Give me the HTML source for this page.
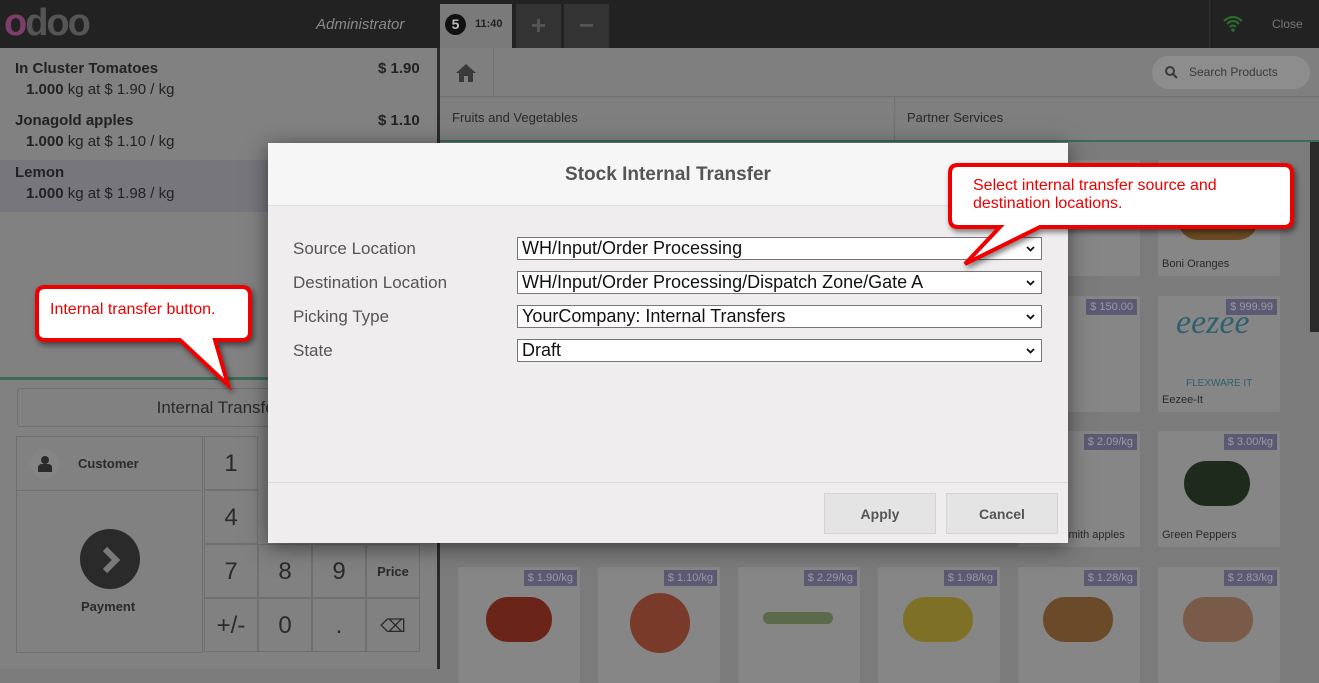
<!DOCTYPE html>
<html><head><style>
*{box-sizing:border-box;margin:0;padding:0}
body{width:1319px;height:669px;overflow:hidden;position:relative;background:#7b7b7b;font-family:"Liberation Sans",sans-serif;color:#333}
.abs{position:absolute}
.top{left:0;top:0;width:1319px;height:48px;background:#222}
.left{left:0;top:48px;width:437px;height:621px;background:#818181}
.sep{left:437px;top:48px;width:3px;height:621px;background:#2a2a2a}
.ol{font-size:15px;color:#222}
.card{position:absolute;width:122px;height:116px;background:#868686;border-radius:2px}
.card .p{position:absolute;right:3px;top:3px;background:#5b5a72;color:#9a9aa5;font-size:11px;padding:2px 4px}
.card .n{position:absolute;left:4px;bottom:6px;font-size:11px;color:#2a2a2a}
.key{position:absolute;width:54px;height:54px;border:1px solid #707070;font-size:24px;color:#2a2a2a;text-align:center;line-height:54px}
.modal{left:268px;top:143px;width:800px;height:400px;background:#efeded;box-shadow:0 4px 20px rgba(0,0,0,.5)}
.lbl{position:absolute;left:25px;font-size:17px;color:#555}
.sel{position:absolute;left:249px;width:525px;height:23px;background:#fff;border:1px solid #777;font-size:18px;color:#111;padding-left:4px;line-height:21px}
.sel svg{position:absolute;right:6px;top:8px}
.btn{position:absolute;top:350px;width:112px;height:41px;background:#e4e4e4;border:1px solid #d3d3d3;font-size:14px;color:#555;text-align:center;line-height:41px;font-weight:bold}
.blob{position:absolute;border-radius:22px}
</style></head><body>
<div class="abs top"></div>
<div class="abs" style="left:4px;top:2px;font-size:38px;color:#555;letter-spacing:-2px;font-weight:bold"><span style="color:#7b3d6a">o</span>doo</div>
<div class="abs" style="left:316px;top:16px;font-size:15px;color:#8a8a8a;font-style:italic">Administrator</div>
<div class="abs" style="left:440px;top:4px;width:72px;height:44px;background:#7a7a7a"></div>
<div class="abs" style="left:445px;top:14px;width:21px;height:21px;border-radius:50%;background:#111;color:#bbb;font-size:14px;text-align:center;line-height:21px;font-weight:bold">5</div>
<div class="abs" style="left:475px;top:18px;font-size:11px;color:#222;font-weight:bold">11:40</div>
<div class="abs" style="left:516px;top:4px;width:45px;height:44px;background:#333;color:#555;font-size:26px;text-align:center;line-height:42px;font-weight:bold">+</div>
<div class="abs" style="left:564px;top:4px;width:45px;height:44px;background:#333;color:#555;font-size:26px;text-align:center;line-height:42px;font-weight:bold">−</div>
<div class="abs" style="left:1209px;top:0;width:1px;height:48px;background:#333"></div>
<svg class="abs" style="left:1222px;top:14px" width="22" height="18"><path d="M2 7 Q11 -1 20 7 M5 10 Q11 4 17 10 M8 13 Q11 10 14 13" stroke="#2d6a2d" stroke-width="2.2" fill="none"/><circle cx="11" cy="16" r="1.8" fill="#2d6a2d"/></svg>
<div class="abs" style="left:1272px;top:17px;font-size:12px;color:#777">Close</div>

<div class="abs left"></div>
<div class="abs" style="left:0;top:160px;width:437px;height:52px;background:#77767d"></div>
<div class="abs ol" style="left:15px;top:60px;font-weight:bold">In Cluster Tomatoes</div><div class="abs ol" style="left:378px;top:60px;font-weight:bold">$ 1.90</div>
<div class="abs ol" style="left:26px;top:81px"><b>1.000</b> kg at $ 1.90 / kg</div>
<div class="abs ol" style="left:15px;top:112px;font-weight:bold">Jonagold apples</div><div class="abs ol" style="left:378px;top:112px;font-weight:bold">$ 1.10</div>
<div class="abs ol" style="left:26px;top:133px"><b>1.000</b> kg at $ 1.10 / kg</div>
<div class="abs ol" style="left:15px;top:164px;font-weight:bold">Lemon</div>
<div class="abs ol" style="left:26px;top:185px"><b>1.000</b> kg at $ 1.98 / kg</div>
<div class="abs" style="left:0;top:377px;width:437px;height:3px;background:#3d6b55"></div>
<div class="abs" style="left:17px;top:388px;width:403px;height:39px;border:1px solid #6f6f6f;border-radius:3px;font-size:17px;color:#2a2a2a;text-align:center;line-height:38px">Internal Transfer</div>
<div class="abs" style="left:16px;top:436px;width:187px;height:217px;border:1px solid #6f6f6f"></div>
<div class="abs" style="left:16px;top:490px;width:187px;height:1px;background:#6f6f6f"></div>
<div class="abs" style="left:30px;top:449px;width:30px;height:30px;border-radius:50%;background:#858585"></div>
<svg class="abs" style="left:37px;top:455px" width="16" height="17"><circle cx="8" cy="5" r="4" fill="#2a2a2a"/><path d="M1 17 V13 Q1 9 5 9 H11 Q15 9 15 13 V17 Z" fill="#2a2a2a"/></svg>
<div class="abs" style="left:78px;top:456px;font-size:13px;font-weight:bold;color:#2a2a2a">Customer</div>
<div class="abs" style="left:80px;top:529px;width:60px;height:60px;border-radius:50%;background:#2a2a2a"></div>
<svg class="abs" style="left:100px;top:546px" width="22" height="28"><path d="M5 3 L16 14 L5 25" stroke="#7a7a7a" stroke-width="6" fill="none"/></svg>
<div class="abs" style="left:81px;top:599px;font-size:13px;font-weight:bold;color:#2a2a2a">Payment</div>
<div class="key" style="left:204px;top:436px">1</div>
<div class="key" style="left:204px;top:490px">4</div>
<div class="key" style="left:204px;top:544px">7</div><div class="key" style="left:258px;top:544px">8</div><div class="key" style="left:312px;top:544px">9</div><div class="key" style="left:366px;top:544px;font-size:13px;font-weight:bold">Price</div>
<div class="key" style="left:204px;top:598px">+/-</div><div class="key" style="left:258px;top:598px">0</div><div class="key" style="left:312px;top:598px">.</div><div class="key" style="left:366px;top:598px;font-size:18px">⌫</div>
<div class="abs sep"></div>

<div class="abs" style="left:440px;top:48px;width:879px;height:49px;background:#7f7f7f;border-bottom:1px solid #707070"></div>
<div class="abs" style="left:440px;top:48px;width:54px;height:49px;border-right:1px solid #707070"></div>
<svg class="abs" style="left:455px;top:63px" width="22" height="20"><path d="M11 1 L1 10 H4 V19 H9 V13 H13 V19 H18 V10 H21 Z" fill="#3a3a3a"/></svg>
<div class="abs" style="left:1152px;top:56px;width:158px;height:33px;border-radius:17px;background:#8d8d8d;font-size:12px;color:#3a3a3a;line-height:33px;padding-left:37px">Search Products</div>
<svg class="abs" style="left:1165px;top:66px" width="13" height="13"><circle cx="5" cy="5" r="4" stroke="#3a3a3a" stroke-width="2" fill="none"/><path d="M8 8 L12 12" stroke="#3a3a3a" stroke-width="2"/></svg>
<div class="abs" style="left:440px;top:98px;width:879px;height:42px;background:#7f7f7f"></div>
<div class="abs" style="left:894px;top:98px;width:1px;height:42px;background:#707070"></div>
<div class="abs" style="left:452px;top:110px;font-size:13px;color:#2a2a2a">Fruits and Vegetables</div>
<div class="abs" style="left:907px;top:110px;font-size:13px;color:#2a2a2a">Partner Services</div>
<div class="abs" style="left:440px;top:140px;width:879px;height:2px;background:#3d6b55"></div>

<div class="card" style="left:1018px;top:160px"><div class="n">Grapes</div></div>
<div class="card" style="left:1158px;top:160px"><div class="blob" style="left:20px;top:40px;width:80px;height:40px;background:#6a4a22"></div><div class="n">Boni Oranges</div></div>
<div class="card" style="left:1018px;top:296px"><div class="p">$ 150.00</div></div>
<div class="card" style="left:1158px;top:296px"><div class="p">$ 999.99</div><div class="abs" style="left:18px;top:8px;font-size:34px;color:#2f6070;font-style:italic;font-family:'Liberation Serif',serif">eezee</div><div class="abs" style="left:28px;top:82px;font-size:10px;color:#2f6070">FLEXWARE IT</div><div class="n">Eezee-It</div></div>
<div class="card" style="left:1018px;top:431px"><div class="p">$ 2.09/kg</div><div class="n">Granny Smith apples</div></div>
<div class="card" style="left:1158px;top:431px"><div class="p">$ 3.00/kg</div><div class="blob" style="left:26px;top:30px;width:66px;height:45px;background:#1e2a1b"></div><div class="n">Green Peppers</div></div>
<div class="card" style="left:458px;top:567px"><div class="p">$ 1.90/kg</div><div class="blob" style="left:28px;top:30px;width:66px;height:45px;background:#6a2418"></div></div>
<div class="card" style="left:598px;top:567px"><div class="p">$ 1.10/kg</div><div class="blob" style="left:32px;top:26px;width:60px;height:60px;border-radius:30px;background:#7a3a2a"></div></div>
<div class="card" style="left:738px;top:567px"><div class="p">$ 2.29/kg</div><div class="blob" style="left:25px;top:45px;width:70px;height:12px;background:#5a6a4a"></div></div>
<div class="card" style="left:878px;top:567px"><div class="p">$ 1.98/kg</div><div class="blob" style="left:25px;top:30px;width:70px;height:45px;background:#7f7028"></div></div>
<div class="card" style="left:1018px;top:567px"><div class="p">$ 1.28/kg</div><div class="blob" style="left:25px;top:30px;width:70px;height:45px;background:#6a4a28"></div></div>
<div class="card" style="left:1158px;top:567px"><div class="p">$ 2.83/kg</div><div class="blob" style="left:25px;top:30px;width:70px;height:45px;background:#7a5a48"></div></div>
<div class="abs" style="left:1310px;top:142px;width:9px;height:190px;background:#2a2a2a"></div>

<div class="abs modal">
<div class="abs" style="left:0;top:0;width:800px;height:63px;background:#f6f6f6;border-bottom:1px solid #e0e0e0;text-align:center;font-size:19px;font-weight:bold;color:#555;line-height:63px">Stock Internal Transfer</div>
<div class="lbl" style="top:96px">Source Location</div><div class="sel" style="top:94px">WH/Input/Order Processing<svg width="9" height="6"><path d="M1 1 L4.5 4.5 L8 1" stroke="#111" stroke-width="1.8" fill="none"/></svg></div>
<div class="lbl" style="top:130px">Destination Location</div><div class="sel" style="top:128px">WH/Input/Order Processing/Dispatch Zone/Gate A<svg width="9" height="6"><path d="M1 1 L4.5 4.5 L8 1" stroke="#111" stroke-width="1.8" fill="none"/></svg></div>
<div class="lbl" style="top:164px">Picking Type</div><div class="sel" style="top:162px">YourCompany: Internal Transfers<svg width="9" height="6"><path d="M1 1 L4.5 4.5 L8 1" stroke="#111" stroke-width="1.8" fill="none"/></svg></div>
<div class="lbl" style="top:198px">State</div><div class="sel" style="top:196px">Draft<svg width="9" height="6"><path d="M1 1 L4.5 4.5 L8 1" stroke="#111" stroke-width="1.8" fill="none"/></svg></div>
<div class="abs" style="left:0;top:339px;width:800px;height:1px;background:#dcdcdc"></div>
<div class="btn" style="left:556px">Apply</div>
<div class="btn" style="left:678px">Cancel</div>
</div>

<svg class="abs" style="left:0;top:0" width="1319" height="669">
<defs><filter id="s"><feDropShadow dx="2" dy="3" stdDeviation="3" flood-opacity=".5"/></filter></defs>
<path filter="url(#s)" d="M45 287 H242 Q250 287 250 295 V332 Q250 340 242 340 H215 L228 385 L180 340 H45 Q37 340 37 332 V295 Q37 287 45 287 Z" fill="#fff" stroke="#e00" stroke-width="4"/>
<text x="50" y="314" font-family="Liberation Sans" font-size="16" fill="#e00">Internal transfer button.</text>
<path filter="url(#s)" d="M958 165 H1284 Q1292 165 1292 173 V219 Q1292 227 1284 227 H1040 L965 264 L1000 227 H958 Q950 227 950 219 V173 Q950 165 958 165 Z" fill="#fff" stroke="#e00" stroke-width="4"/>
<text x="973" y="190" font-family="Liberation Sans" font-size="16" fill="#e00">Select internal transfer source and</text>
<text x="973" y="208" font-family="Liberation Sans" font-size="16" fill="#e00">destination locations.</text>
</svg>
</body></html>
